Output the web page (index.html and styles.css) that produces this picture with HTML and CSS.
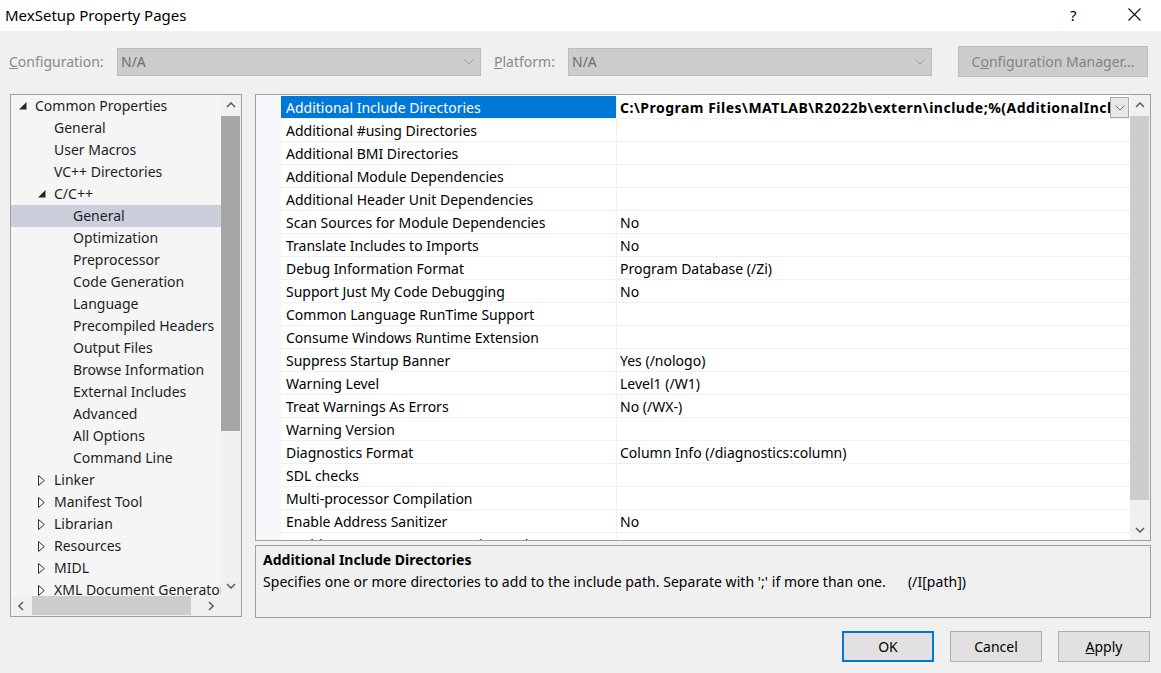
FILE: index.html
```html
<!DOCTYPE html>
<html>
<head>
<meta charset="utf-8">
<title>MexSetup Property Pages</title>
<link rel="stylesheet" href="styles.css">
</head>
<body>
<div class="window">
  <div class="titlebar">
    <span class="title">MexSetup Property Pages</span>
    <div class="title-controls">
      <span class="help">?</span>
      <svg class="close" width="13" height="13" viewBox="0 0 13 13"><path d="M0.5 0.5 L12.5 12.5 M12.5 0.5 L0.5 12.5" stroke="#111" stroke-width="1.1" fill="none"/></svg>
    </div>
  </div>
  <div class="body">
    <div class="toolbar">
      <span class="lbl lbl-cfg"><u>C</u>onfiguration:</span>
      <div class="select sel-cfg"><span class="sel-text">N/A</span><svg width="10" height="6" viewBox="0 0 10 6"><polyline points="0.5,0.5 5,5 9.5,0.5" fill="none" stroke="#9a9a9a" stroke-width="1"/></svg></div>
      <span class="lbl lbl-plat"><u>P</u>latform:</span>
      <div class="select sel-plat"><span class="sel-text">N/A</span><svg width="10" height="6" viewBox="0 0 10 6"><polyline points="0.5,0.5 5,5 9.5,0.5" fill="none" stroke="#9a9a9a" stroke-width="1"/></svg></div>
      <div class="cfg-mgr">C<u>o</u>nfiguration Manager...</div>
    </div>

    <div class="content">
      <div class="tree">
        <div class="tree-main">
          <div class="tree-items">
            <div class="node l0"><span class="twisty"><svg width="8" height="8" viewBox="0 0 8 8"><polygon points="7.5,0 7.5,7.5 0,7.5" fill="#262626"/></svg></span>Common Properties</div>
            <div class="node l1"><span class="twisty"></span>General</div>
            <div class="node l1"><span class="twisty"></span>User Macros</div>
            <div class="node l1"><span class="twisty"></span>VC++ Directories</div>
            <div class="node l1"><span class="twisty"><svg width="8" height="8" viewBox="0 0 8 8"><polygon points="7.5,0 7.5,7.5 0,7.5" fill="#262626"/></svg></span>C/C++</div>
            <div class="node l2 selected"><span class="twisty"></span>General</div>
            <div class="node l2"><span class="twisty"></span>Optimization</div>
            <div class="node l2"><span class="twisty"></span>Preprocessor</div>
            <div class="node l2"><span class="twisty"></span>Code Generation</div>
            <div class="node l2"><span class="twisty"></span>Language</div>
            <div class="node l2"><span class="twisty"></span>Precompiled Headers</div>
            <div class="node l2"><span class="twisty"></span>Output Files</div>
            <div class="node l2"><span class="twisty"></span>Browse Information</div>
            <div class="node l2"><span class="twisty"></span>External Includes</div>
            <div class="node l2"><span class="twisty"></span>Advanced</div>
            <div class="node l2"><span class="twisty"></span>All Options</div>
            <div class="node l2"><span class="twisty"></span>Command Line</div>
            <div class="node l1"><span class="twisty"><svg width="7" height="11" viewBox="0 0 7 11"><polygon points="0.5,0.5 6.3,5.5 0.5,10.5" fill="none" stroke="#303030" stroke-width="1"/></svg></span>Linker</div>
            <div class="node l1"><span class="twisty"><svg width="7" height="11" viewBox="0 0 7 11"><polygon points="0.5,0.5 6.3,5.5 0.5,10.5" fill="none" stroke="#303030" stroke-width="1"/></svg></span>Manifest Tool</div>
            <div class="node l1"><span class="twisty"><svg width="7" height="11" viewBox="0 0 7 11"><polygon points="0.5,0.5 6.3,5.5 0.5,10.5" fill="none" stroke="#303030" stroke-width="1"/></svg></span>Librarian</div>
            <div class="node l1"><span class="twisty"><svg width="7" height="11" viewBox="0 0 7 11"><polygon points="0.5,0.5 6.3,5.5 0.5,10.5" fill="none" stroke="#303030" stroke-width="1"/></svg></span>Resources</div>
            <div class="node l1"><span class="twisty"><svg width="7" height="11" viewBox="0 0 7 11"><polygon points="0.5,0.5 6.3,5.5 0.5,10.5" fill="none" stroke="#303030" stroke-width="1"/></svg></span>MIDL</div>
            <div class="node l1"><span class="twisty"><svg width="7" height="11" viewBox="0 0 7 11"><polygon points="0.5,0.5 6.3,5.5 0.5,10.5" fill="none" stroke="#303030" stroke-width="1"/></svg></span>XML Document Generator</div>
          </div>
          <div class="vscroll tree-vscroll">
            <div class="sb-btn"><svg width="10" height="6" viewBox="0 0 10 6"><polyline points="1,5 5,1 9,5" fill="none" stroke="#606060" stroke-width="1.6"/></svg></div>
            <div class="sb-track"><div class="thumb thumb-dark tree-thumb"></div></div>
            <div class="sb-btn"><svg width="10" height="6" viewBox="0 0 10 6"><polyline points="1,1 5,5 9,1" fill="none" stroke="#606060" stroke-width="1.6"/></svg></div>
          </div>
        </div>
        <div class="hscroll">
          <div class="sb-btn"><svg width="6" height="10" viewBox="0 0 6 10"><polyline points="5,1 1,5 5,9" fill="none" stroke="#606060" stroke-width="1.6"/></svg></div>
          <div class="h-track"><div class="hthumb"></div></div>
          <div class="sb-btn"><svg width="6" height="10" viewBox="0 0 6 10"><polyline points="1,1 5,5 1,9" fill="none" stroke="#606060" stroke-width="1.6"/></svg></div>
          <div class="sb-corner"></div>
        </div>
      </div>

      <div class="right">
        <div class="grid">
          <div class="margin-col"></div>
          <div class="rows">
            <div class="row selected"><div class="name">Additional Include Directories</div><div class="value"><span class="val-text bold">C:\Program Files\MATLAB\R2022b\extern\include;%(AdditionalIncludeDirectories)</span><span class="drop"><svg width="10" height="6" viewBox="0 0 10 6"><polyline points="0.5,0.5 5,5 9.5,0.5" fill="none" stroke="#707070" stroke-width="1"/></svg></span></div></div>
            <div class="row"><div class="name">Additional #using Directories</div><div class="value"></div></div>
            <div class="row"><div class="name">Additional BMI Directories</div><div class="value"></div></div>
            <div class="row"><div class="name">Additional Module Dependencies</div><div class="value"></div></div>
            <div class="row"><div class="name">Additional Header Unit Dependencies</div><div class="value"></div></div>
            <div class="row"><div class="name">Scan Sources for Module Dependencies</div><div class="value">No</div></div>
            <div class="row"><div class="name">Translate Includes to Imports</div><div class="value">No</div></div>
            <div class="row"><div class="name">Debug Information Format</div><div class="value">Program Database (/Zi)</div></div>
            <div class="row"><div class="name">Support Just My Code Debugging</div><div class="value">No</div></div>
            <div class="row"><div class="name">Common Language RunTime Support</div><div class="value"></div></div>
            <div class="row"><div class="name">Consume Windows Runtime Extension</div><div class="value"></div></div>
            <div class="row"><div class="name">Suppress Startup Banner</div><div class="value">Yes (/nologo)</div></div>
            <div class="row"><div class="name">Warning Level</div><div class="value">Level1 (/W1)</div></div>
            <div class="row"><div class="name">Treat Warnings As Errors</div><div class="value">No (/WX-)</div></div>
            <div class="row"><div class="name">Warning Version</div><div class="value"></div></div>
            <div class="row"><div class="name">Diagnostics Format</div><div class="value">Column Info (/diagnostics:column)</div></div>
            <div class="row"><div class="name">SDL checks</div><div class="value"></div></div>
            <div class="row"><div class="name">Multi-processor Compilation</div><div class="value"></div></div>
            <div class="row"><div class="name">Enable Address Sanitizer</div><div class="value">No</div></div>
            <div class="row"><div class="name">Enable Fuzzer Support (Experimental)</div><div class="value">No</div></div>
          </div>
          <div class="vscroll grid-vscroll">
            <div class="sb-btn"><svg width="10" height="6" viewBox="0 0 10 6"><polyline points="1,5 5,1 9,5" fill="none" stroke="#606060" stroke-width="1.6"/></svg></div>
            <div class="sb-track"><div class="thumb grid-thumb"></div></div>
            <div class="sb-btn"><svg width="10" height="6" viewBox="0 0 10 6"><polyline points="1,1 5,5 9,1" fill="none" stroke="#606060" stroke-width="1.6"/></svg></div>
          </div>
        </div>
        <div class="desc">
          <div class="desc-title">Additional Include Directories</div>
          <div class="desc-text">Specifies one or more directories to add to the include path. Separate with ';' if more than one.<span class="switch">(/I[path])</span></div>
        </div>
      </div>
    </div>

    <div class="buttons">
      <div class="btn default">OK</div>
      <div class="btn">Cancel</div>
      <div class="btn"><u>A</u>pply</div>
    </div>
  </div>
</div>
</body>
</html>
```

FILE: styles.css
```css
* { box-sizing: border-box; }
html, body { margin: 0; padding: 0; }
body {
  width: 1161px;
  height: 673px;
  overflow: hidden;
  font-family: "Noto Sans", "Open Sans", sans-serif;
  font-size: 14px;
  color: #000;
  background: #f0f0f0;
}
.window { width: 1161px; height: 673px; display: flex; flex-direction: column; }

.titlebar {
  height: 31px;
  background: #fff;
  display: flex;
  align-items: center;
  justify-content: space-between;
  padding: 0 0 2px 5px;
}
.title { font-size: 15px; color: #000; }
.title-controls { display: flex; align-items: center; }
.help { font-size: 15px; width: 10px; margin-right: 48px; }
.close { margin-right: 20px; }

.body {
  flex: 1;
  display: flex;
  flex-direction: column;
  padding: 0 11px 0 10px;
}

.toolbar {
  display: flex;
  align-items: center;
  height: 31px;
  margin-top: 15px;
  margin-bottom: 17px;
  padding-left: 0;
}
.lbl { color: #8a8a8a; }
.lbl-cfg { margin-left: -1px; width: 108px; }
.lbl-plat { margin-left: 13px; width: 74px; }
.select {
  height: 28px;
  width: 364px;
  background: #cccccc;
  border: 1px solid #bcbcbc;
  display: flex;
  align-items: center;
  justify-content: space-between;
  padding: 0 6px 0 3px;
}
.sel-text { color: #6d6d6d; }
.cfg-mgr {
  margin-left: 26px;
  width: 190px;
  height: 31px;
  background: #cccccc;
  border: 1px solid #bcbcbc;
  color: #838383;
  display: flex;
  align-items: center;
  justify-content: center;
}

.content {
  display: flex;
  height: 524px;
}

/* tree */
.tree {
  width: 232px;
  height: 523px;
  border: 1px solid #a0a0a0;
  background: #f5f5f5;
  display: flex;
  flex-direction: column;
}
.tree-main { flex: 1; display: flex; min-height: 0; }
.tree-items { flex: 1; overflow: hidden; color: #1e1e1e; }
.node {
  height: 22px;
  line-height: 22px;
  display: flex;
  align-items: center;
  white-space: nowrap;
}
.twisty { width: 16px; flex: none; display: flex; align-items: center; }
.l0 { padding-left: 8px; }
.l1 { padding-left: 27px; }
.l2 { padding-left: 46px; }
.node.selected { background: #cccedb; }

.vscroll {
  width: 20px;
  flex: none;
  background: #f0f0f0;
  display: flex;
  flex-direction: column;
}
.sb-btn {
  width: 20px;
  height: 20px;
  flex: none;
  display: flex;
  align-items: center;
  justify-content: center;
}
.sb-track { flex: 1; position: relative; }
.thumb { width: 19px; background: #cdcdcd; }
.thumb-dark { background: #a6a6a6; }
.tree-thumb { height: 315px; margin-top: 1px; }
.hscroll {
  height: 20px;
  flex: none;
  display: flex;
  background: #f0f0f0;
}
.h-track { flex: 1; display: flex; align-items: stretch; padding: 0 0 1px 1px; }
.hthumb { width: 159px; background: #cdcdcd; }
.sb-corner { width: 20px; background: #f0f0f0; }

/* right side */
.right {
  margin-left: 13px;
  width: 896px;
  display: flex;
  flex-direction: column;
}
.grid {
  height: 447px;
  border: 1px solid #a0a0a0;
  background: #fff;
  display: flex;
  overflow: hidden;
}
.margin-col { width: 25px; flex: none; background: #f5f7fb; }
.rows { flex: 1; padding-top: 1px; overflow: hidden; }
.row {
  display: flex;
  height: 23px;
  border-bottom: 1px solid #f0f0f3;
  white-space: nowrap;
  overflow: hidden;
}
.name {
  width: 336px;
  flex: none;
  padding-left: 5px;
  line-height: 24px;
  height: 22px;
  border-right: 1px solid #f0f0f3;
}
.value {
  flex: 1;
  min-width: 0;
  padding-left: 3px;
  line-height: 24px;
  height: 22px;
  display: flex;
}
.row.selected .name { background: #0078d7; color: #fff; }
.val-text { flex: 1; overflow: hidden; white-space: nowrap; }
.bold { font-weight: bold; letter-spacing: 0.5px; }
.drop {
  width: 19px;
  height: 21px;
  margin-top: 1px;
  margin-right: 1px;
  border: 1px solid #a8a8a8;
  background: #e8e8e8;
  display: flex;
  align-items: center;
  justify-content: center;
  flex: none;
}
.grid-thumb { height: 384px; margin-top: 1px; }

.desc {
  margin-top: 4px;
  height: 73px;
  border: 1px solid #a0a0a0;
  background: #f0f0f0;
  padding: 3px 0 0 7px;
}
.desc-title { font-weight: bold; line-height: 22px; }
.desc-text { line-height: 22px; white-space: nowrap; letter-spacing: 0.05px; }
.switch { margin-left: 22px; }

.buttons {
  display: flex;
  justify-content: flex-end;
  gap: 16px;
  margin-top: 13px;
}
.btn {
  width: 92px;
  height: 31px;
  background: #e1e1e1;
  border: 1px solid #adadad;
  display: flex;
  align-items: center;
  justify-content: center;
}
.btn.default { border: 2px solid #0078d7; }
```
